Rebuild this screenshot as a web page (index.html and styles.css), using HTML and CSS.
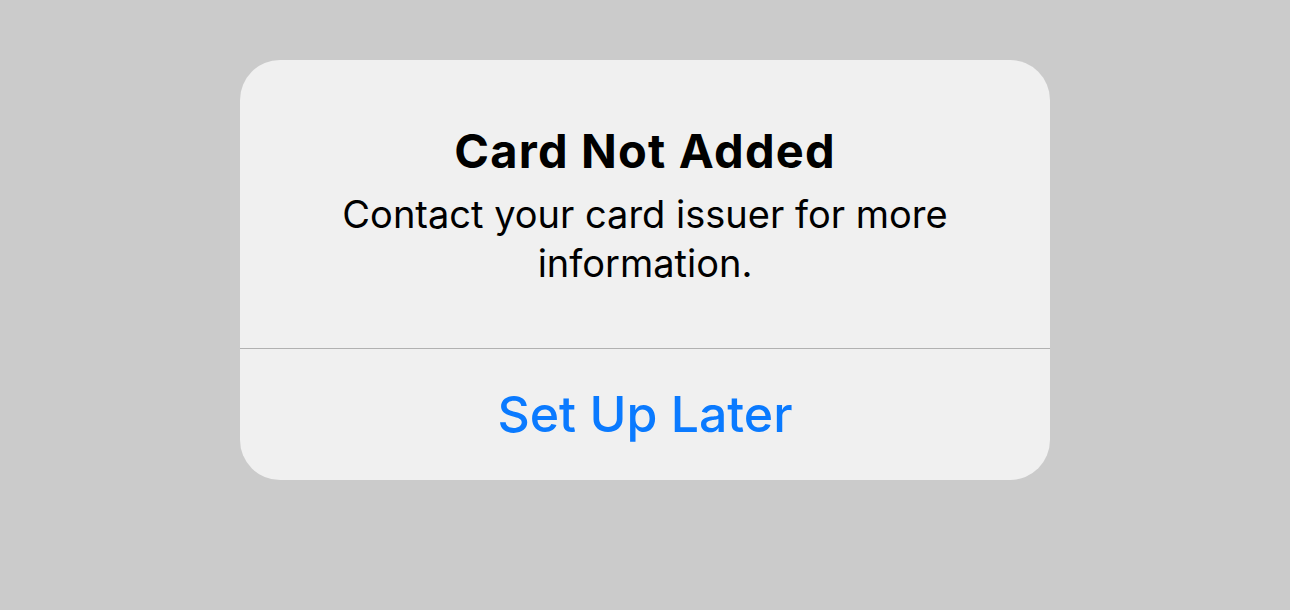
FILE: index.html
```html
<!DOCTYPE html>
<html lang="en">
<head>
<meta charset="utf-8">
<title>Card Not Added</title>
<link rel="stylesheet" href="styles.css">
</head>
<body>
<div class="stage">
  <div class="alert" role="alertdialog">
    <div class="alert-body">
      <h1 class="alert-title">Card Not Added</h1>
      <p class="alert-message">Contact your card issuer for more information.</p>
    </div>
    <div class="alert-actions">
      <button class="alert-button">Set Up Later</button>
    </div>
  </div>
</div>
</body>
</html>
```
FILE: styles.css
```css
html, body {
  margin: 0;
  padding: 0;
  background: #cbcbcb;
}
.stage {
  width: 1290px;
  height: 610px;
  display: flex;
  justify-content: center;
  align-items: flex-start;
  padding-top: 60px;
  box-sizing: border-box;
  font-family: Inter, "Noto Sans", "Liberation Sans", sans-serif;
}
.alert {
  width: 810px;
  height: 420px;
  background: #f0f0f0;
  border-radius: 40px;
  display: flex;
  flex-direction: column;
  overflow: hidden;
}
.alert-body {
  height: 289px;
  box-sizing: border-box;
  border-bottom: 1px solid #b1b1b1;
  padding: 65px 80px 0;
  text-align: center;
}
.alert-title {
  margin: 0;
  font-size: 47px;
  font-weight: 700;
  letter-spacing: 1.2px;
  line-height: 52px;
  color: #000;
}
.alert-message {
  margin: 13px 0 0;
  font-size: 38px;
  font-weight: 400;
  line-height: 49px;
  color: #000;
}
.alert-actions {
  flex: 1;
  display: flex;
  align-items: center;
  justify-content: center;
  padding-bottom: 2px;
}
.alert-button {
  border: 0;
  background: none;
  padding: 0;
  font-family: inherit;
  font-size: 50px;
  font-weight: 500;
  color: #0a7aff;
}
```
